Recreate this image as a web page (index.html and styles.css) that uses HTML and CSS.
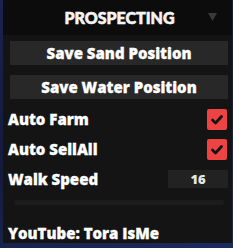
FILE: index.html
```html
<!DOCTYPE html>
<html>
<head>
<meta charset="utf-8">
<link rel="stylesheet" href="styles.css">
</head>
<body>
<div class="window">
  <div class="header">
    <div class="title">PROSPECTING</div>
    <svg class="caret" width="9" height="8" viewBox="0 0 9 8"><path d="M0 0H9L4.5 8Z" fill="#3a3a3a"/></svg>
  </div>
  <div class="content">
    <div class="button">Save Sand Position</div>
    <div class="button">Save Water Position</div>
    <div class="row">
      <span class="label">Auto Farm</span>
      <span class="check"><svg width="20" height="21" viewBox="0 0 20 21"><path d="M5.5 11 L8.5 14 L14.5 7.5" fill="none" stroke="#151515" stroke-width="2.8" stroke-linecap="round" stroke-linejoin="round"/></svg></span>
    </div>
    <div class="row">
      <span class="label">Auto SellAll</span>
      <span class="check"><svg width="20" height="21" viewBox="0 0 20 21"><path d="M5.5 11 L8.5 14 L14.5 7.5" fill="none" stroke="#151515" stroke-width="2.8" stroke-linecap="round" stroke-linejoin="round"/></svg></span>
    </div>
    <div class="row">
      <span class="label">Walk Speed</span>
      <span class="input">16</span>
    </div>
    <div class="track"></div>
    <div class="footer">YouTube: Tora IsMe</div>
  </div>
</div>
</body>
</html>
```
FILE: styles.css
```css
html, body {
  margin: 0;
  padding: 0;
}
body {
  width: 233px;
  height: 248px;
  overflow: hidden;
  background: linear-gradient(160deg, #1a2250 0%, #141b3c 50%, #1d2a5e 100%);
  font-family: "Open Sans", "Liberation Sans", sans-serif;
  color: #ffffff;
}
.window {
  margin-left: 3px;
  width: 229px;
  height: 243px;
  background: #141414;
  display: flex;
  flex-direction: column;
}
.header {
  height: 36px;
  background: #0c0c0c;
  display: flex;
  align-items: center;
  justify-content: center;
  position: relative;
}
.title {
  font-family: "Lato", sans-serif;
  font-weight: 900;
  font-size: 16px;
  margin-left: 4px;
  color: #f4f4f4;
  -webkit-text-stroke: 0.6px #f4f4f4;
}
.caret {
  position: absolute;
  right: 15px;
  top: 13px;
}
.content {
  display: flex;
  flex-direction: column;
  padding: 6px 4px 0 5px;
}
.button {
  height: 24px;
  margin-left: 2px;
  background: #282828;
  display: flex;
  align-items: center;
  justify-content: center;
  font-weight: 800;
  font-size: 15px;
  margin-bottom: 10px;
  -webkit-text-stroke: 0.3px #ffffff;
}
.button + .button {
  margin-bottom: 5px;
}
.row {
  height: 30px;
  display: flex;
  align-items: center;
  justify-content: space-between;
}
.label {
  font-weight: 800;
  font-size: 15px;
  -webkit-text-stroke: 0.3px #ffffff;
}
.check {
  width: 20px;
  height: 21px;
  margin-right: 1px;
  background: #ee4343;
  border-radius: 2px;
  display: block;
}
.check svg {
  display: block;
}
.input {
  width: 60px;
  height: 18px;
  background: #222222;
  display: flex;
  align-items: center;
  justify-content: center;
  font-weight: 800;
  font-size: 13px;
  color: #e6e6e6;
}
.track {
  height: 5px;
  margin: 6px 4px 0 6px;
  background: #1c1c1c;
  border-radius: 2px;
}
.footer {
  margin-top: 18px;
  font-weight: 800;
  font-size: 15px;
  -webkit-text-stroke: 0.3px #ffffff;
}
```
